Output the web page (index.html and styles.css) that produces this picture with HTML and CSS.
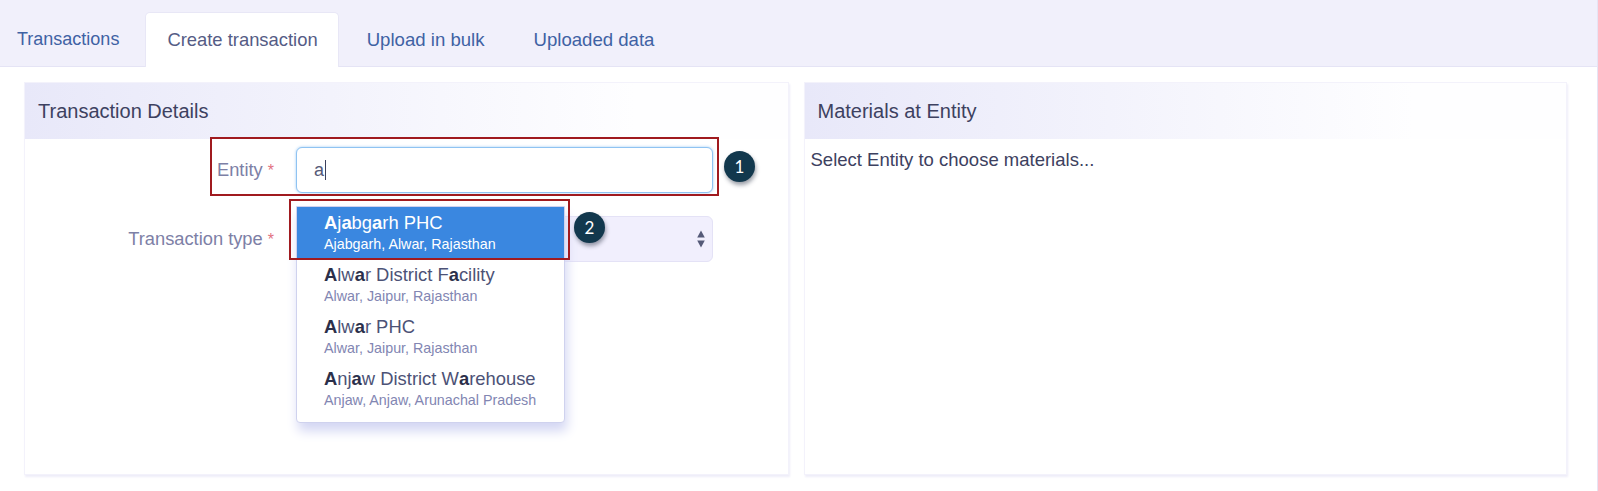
FILE: index.html
```html
<!DOCTYPE html>
<html lang="en">
<head>
<meta charset="utf-8">
<title>Create transaction</title>
<link rel="stylesheet" href="styles.css">
</head>
<body>
<div class="page">
  <nav class="tabs">
    <a class="tab first">Transactions</a>
    <a class="tab active">Create transaction</a>
    <a class="tab">Upload in bulk</a>
    <a class="tab">Uploaded data</a>
  </nav>
  <main class="panels">
    <section class="panel left">
      <h2 class="panel-head">Transaction Details</h2>
      <div class="form">
        <div class="row">
          <label class="label">Entity <i>*</i></label>
          <div class="field input"><span>a</span><span class="caret"></span></div>
        </div>
        <div class="row">
          <label class="label">Transaction type <i>*</i></label>
          <div class="field select">
            <svg class="arrows" width="8" height="18" viewBox="0 0 8 18"><path d="M4 .5 7.8 7.6H.2zM4 17.5.2 10.4H7.8z" fill="#555a78"/></svg>
          </div>
        </div>
      </div>
    </section>
    <section class="panel right">
      <h2 class="panel-head">Materials at Entity</h2>
      <p class="hint">Select Entity to choose materials...</p>
    </section>
  </main>

  <ul class="menu">
    <li class="item selected"><div class="name"><b>A</b>j<b>a</b>bg<b>a</b>rh PHC</div><div class="sub">Ajabgarh, Alwar, Rajasthan</div></li>
    <li class="item"><div class="name"><b>A</b>lw<b>a</b>r District F<b>a</b>cility</div><div class="sub">Alwar, Jaipur, Rajasthan</div></li>
    <li class="item"><div class="name"><b>A</b>lw<b>a</b>r PHC</div><div class="sub">Alwar, Jaipur, Rajasthan</div></li>
    <li class="item"><div class="name"><b>A</b>nj<b>a</b>w District W<b>a</b>rehouse</div><div class="sub">Anjaw, Anjaw, Arunachal Pradesh</div></li>
  </ul>

  <div class="callout box-one"></div>
  <div class="callout box-two"></div>
  <div class="badge badge-one">1</div>
  <div class="badge badge-two">2</div>
</div>
</body>
</html>
```
FILE: styles.css
```css
* { box-sizing: border-box; }
html, body { margin: 0; padding: 0; background: #fff; }
body { font-family: "Liberation Sans", Arial, sans-serif; color: #4c5070; }
.page { position: relative; width: 1598px; height: 491px; overflow: hidden; border-right: 1px solid #e6e4f4; }

.tabs { display: flex; height: 67px; padding-top: 12px; background: #f1f0fb; border-bottom: 1px solid #e5e4f5; }
.tab { display: flex; align-items: center; height: 55px; padding: 0 21px; margin-right: 7px; font-size: 18.6px; color: #3f62a4; }
.tab.first { padding-left: 17px; font-size: 18px; margin-right: 5px; }
.tab.active { font-size: 18.4px; background: #fff; color: #555c85; border: 1px solid #e8e7f6; border-bottom: 0; border-radius: 5px 5px 0 0; padding: 0 20px 0 21px; }

.panels { display: flex; gap: 15px; padding: 15px 30px 0 24px; }
.panel { height: 393px; border: 1px solid #f3f2fb; box-shadow: 1px 2px 2px #eeedf9; background: #fff; }
.panel.left { width: 765px; }
.panel.right { width: 764px; }
.panel-head { height: 56px; margin: 0; padding: 0 13px; display: flex; align-items: center; font-size: 20px; font-weight: 400; color: #3d4160; background: linear-gradient(90deg, #e8e8f9, #fefeff 80%); }
.hint { margin: 11px 6px; font-size: 18.5px; line-height: 20px; color: #3d4160; }

.form { padding-top: 8px; display: flex; flex-direction: column; gap: 23px; }
.row { display: flex; align-items: center; }
.label { width: 249px; margin-right: 22px; text-align: right; font-size: 18.3px; color: #7d80a6; }
.label i { font-style: normal; font-size: 16px; color: #e2727f; }
.field { width: 417px; height: 46px; border-radius: 6px; }
.input { display: flex; align-items: center; padding-left: 17px; font-size: 18px; color: #555a78; border: 1px solid #8fc3f2; box-shadow: 0 0 3px #9fcbf4; background: #fff; }
.caret { width: 1px; height: 20px; background: #3c405c; margin-left: 1px; }
.select { position: relative; background: #f1effd; border: 1px solid #e4e2f6; }
.arrows { position: absolute; right: 7px; top: 13px; }

.menu { position: absolute; left: 296px; top: 206px; width: 269px; height: 217px; margin: 0; padding: 0; list-style: none; background: #fff; border: 1px solid #cfd2ee; border-radius: 0 0 4px 4px; box-shadow: 2px 8px 12px #d3d6f3; }
.item { height: 52px; padding: 6px 0 0 27px; color: #4c5276; }
.item.selected { height: 52px; background: #3a87e0; color: #fff; padding-top: 6px; }
.name { font-size: 18.4px; line-height: 20px; }
.name b { color: #2b2f4a; }
.selected .name b { color: #fff; }
.sub { margin-top: 3px; font-size: 14.3px; line-height: 16px; color: #8286b2; }
.selected .sub { color: #fff; }

.callout { position: absolute; border: 2px solid #a01a1f; }
.box-one { left: 210px; top: 137px; width: 509px; height: 59px; }
.box-two { left: 289px; top: 199px; width: 281px; height: 61px; }

.badge { position: absolute; width: 31px; height: 31px; display: flex; align-items: center; justify-content: center; border-radius: 50%; background: #12384d; color: #fff; font-family: Lato, "Liberation Sans", sans-serif; font-size: 17px; box-shadow: 1px 3px 4px rgba(30, 40, 60, .45); }
.badge-one { left: 724px; top: 151px; }
.badge-two { left: 574px; top: 212px; }
```
